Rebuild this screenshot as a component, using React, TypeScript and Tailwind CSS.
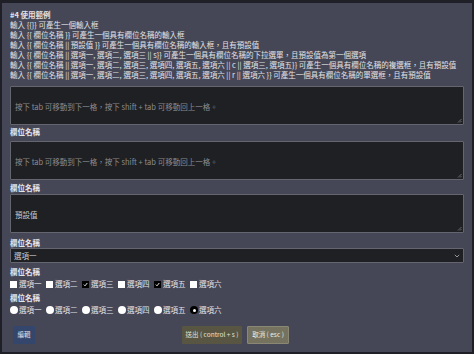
import React from "react";

const font = { fontFamily: '"Noto Sans CJK TC", "Noto Sans", sans-serif' };

const Label = ({ children, cls = "" }: { children: React.ReactNode; cls?: string }) => (
  <div className={`text-[7.5px] leading-[10px] font-bold text-[#e6e6ea] ${cls}`}>{children}</div>
);

const Textarea = ({ text, placeholder }: { text?: string; placeholder?: boolean }) => (
  <div className="relative h-[39px] bg-[#1f2023] border border-[#64656f] rounded-[1px] px-[4px] pt-[4px]">
    <span className={`text-[7.5px] leading-[10px] ${placeholder ? "text-[#8c8c90]" : "text-[#c9c9cc]"}`}>{text}</span>
    <svg className="absolute right-[1px] bottom-[1px]" width="5" height="5" viewBox="0 0 5 5">
      <path d="M4.5 1 L1 4.5 M4.5 3 L3 4.5" stroke="#8a8a90" strokeWidth="0.7" />
    </svg>
  </div>
);

const opts = ["選項一", "選項二", "選項三", "選項四", "選項五", "選項六"];

export default function App() {
  return (
    <div className="w-[474px] h-[354px] bg-[#1e1f27] pt-[3px] pl-[2px] overflow-hidden" style={font}>
      <div className="w-[470px] h-[349px] bg-[#464756] px-[8px] pt-[7px] flex flex-col">
        <div className="text-[7.5px] leading-[10px] text-[#e2e2e6] whitespace-nowrap">
          <div className="font-bold">#4 使用範例</div>
          <div>輸入 {"{{}}"} 可產生一個輸入框</div>
          <div>輸入 {"{{"} 欄位名稱 {"}}"} 可產生一個具有欄位名稱的輸入框</div>
          <div>輸入 {"{{"} 欄位名稱 || 預設值 {"}}"} 可產生一個具有欄位名稱的輸入框，且有預設值</div>
          <div>輸入 {"{{"} 欄位名稱 || 選項一, 選項二, 選項三 || s{"}}"} 可產生一個具有欄位名稱的下拉選單，且預設值為第一個選項</div>
          <div>輸入 {"{{"} 欄位名稱 || 選項一, 選項二, 選項三, 選項四, 選項五, 選項六 || c || 選項三, 選項五{"}}"} 可產生一個具有欄位名稱的複選框，且有預設值</div>
          <div>輸入 {"{{"} 欄位名稱 || 選項一, 選項二, 選項三, 選項四, 選項五, 選項六 || r || 選項六 {"}}"} 可產生一個具有欄位名稱的單選框，且有預設值</div>
        </div>
        <div className="mt-[6px]">
          <Textarea placeholder text="按下 tab 可移動到下一格，按下 shift + tab 可移動回上一格。" />
        </div>
        <Label cls="mt-[2px] mb-[4px]">欄位名稱</Label>
        <Textarea placeholder text="按下 tab 可移動到下一格，按下 shift + tab 可移動回上一格。" />
        <Label cls="mt-[3px] mb-[1px]">欄位名稱</Label>
        <Textarea text="預設值" />
        <Label cls="mt-[5px] mb-[0px]">欄位名稱</Label>
        <div className="h-[15px] bg-[#1f2023] border border-[#64656f] rounded-[1px] px-[3px] flex items-center justify-between">
          <span className="text-[7.5px] leading-[10px] text-[#c9c9cc]">選項一</span>
          <svg width="6" height="4" viewBox="0 0 6 4">
            <path d="M0.8 0.8 L3 3 L5.2 0.8" stroke="#a0a0a6" strokeWidth="0.9" fill="none" />
          </svg>
        </div>
        <Label cls="mt-[4px]">欄位名稱</Label>
        <div className="flex mt-[2px] h-[10px] items-center">
          {opts.map((o, i) => {
            const checked = i === 2 || i === 4;
            return (
              <div key={o} className="w-[36px] flex items-center gap-[2px]">
                <span className={`w-[7px] h-[7px] flex items-center justify-center ${checked ? "bg-black" : "bg-white"}`}>
                  {checked && (
                    <svg width="5" height="5" viewBox="0 0 5 5">
                      <path d="M0.8 2.6 L2 3.8 L4.3 1" stroke="white" strokeWidth="0.9" fill="none" />
                    </svg>
                  )}
                </span>
                <span className="text-[7.5px] leading-[10px] text-[#e2e2e6]">{o}</span>
              </div>
            );
          })}
        </div>
        <Label cls="mt-[4px]">欄位名稱</Label>
        <div className="flex mt-[2px] h-[10px] items-center">
          {opts.map((o, i) => {
            const checked = i === 5;
            return (
              <div key={o} className="w-[36px] flex items-center gap-[1px]">
                <span className={`w-[8px] h-[8px] rounded-full flex items-center justify-center ${checked ? "bg-black" : "bg-white"}`}>
                  {checked && <span className="w-[3px] h-[3px] rounded-full bg-white" />}
                </span>
                <span className="text-[7.5px] leading-[10px] text-[#e2e2e6]">{o}</span>
              </div>
            );
          })}
        </div>
        <div className="flex items-center mt-[11px]">
          <div className="ml-[3px] w-[22px] h-[18px] bg-[#34466c] flex items-center justify-center text-[6.5px] text-[#dfe3ee]">編輯</div>
          <div className="ml-[147px] w-[60px] h-[18px] bg-[#585642] flex items-center justify-center text-[6.5px] text-[#e4e2d6] rounded-[1px]">送出 ( control + s )</div>
          <div className="ml-[5px] w-[42px] h-[18px] bg-[#75735f] border border-[#8a8874] flex items-center justify-center text-[6.5px] text-[#eeeee6] rounded-[1px]">取消 ( esc )</div>
        </div>
      </div>
    </div>
  );
}
